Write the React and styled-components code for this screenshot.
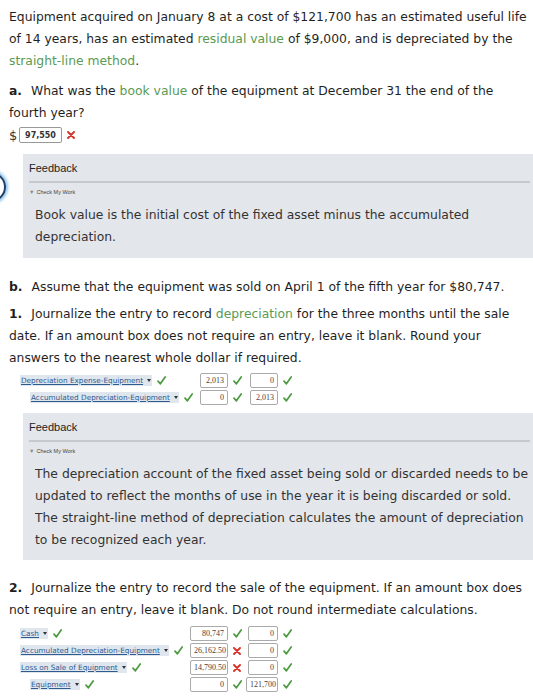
import React from 'react';
import styled, { createGlobalStyle } from 'styled-components';

const GlobalStyle = createGlobalStyle`
  html, body {
    margin: 0;
    padding: 0;
    background: #fff;
  }
  body {
    font-family: "DejaVu Sans", Verdana, sans-serif;
    color: #222;
  }
`;

const Page = styled.div`
  position: relative;
  width: 533px;
  height: 700px;
  overflow: hidden;
  padding: 6px 0 0 9px;
  box-sizing: border-box;
`;

const Para = styled.p`
  margin: 0 0 ${(p) => p.$gap ?? 8}px 0;
  font-size: 12.35px;
  line-height: 22px;
  color: #1f1f1f;
`;

const Term = styled.span`
  color: #5a9a52;
`;

const Num = styled.b`
  font-weight: bold;
  margin-right: 9px;
`;

const AnswerRow = styled.div`
  display: flex;
  align-items: center;
  height: 22px;
  margin-bottom: 8px;
`;

const Dollar = styled.span`
  font-size: 13px;
  color: #333;
  width: 10px;
`;

const AnswerBox = styled.span`
  display: inline-block;
  width: 43px;
  height: 16px;
  line-height: 15px;
  border: 1px solid #999;
  border-radius: 2px;
  font-size: 8px;
  font-weight: bold;
  text-align: center;
  color: #333;
  box-sizing: border-box;
`;

const MarkSlot = styled.span`
  display: inline-flex;
  align-items: center;
  justify-content: ${(p) => (p.$start ? 'flex-start' : 'center')};
  width: ${(p) => p.$w || 14}px;
  padding-left: ${(p) => p.$pl || 0}px;
  box-sizing: border-box;
  flex-shrink: 0;
`;

function Mark({ bad, w, start, pl }) {
  return (
    <MarkSlot $w={w} $start={start} $pl={pl}>
      {bad ? (
        <svg width="8" height="8" viewBox="0 0 8 8">
          <path d="M1 1 L7 7 M7 1 L1 7" stroke="#d8342b" strokeWidth="1.9" strokeLinecap="round" />
        </svg>
      ) : (
        <svg width="9" height="9" viewBox="0 0 9 9">
          <path d="M1 5.2 L3.4 7.8 L8.2 1" fill="none" stroke="#4b9b3f" strokeWidth="1.7" strokeLinecap="round" strokeLinejoin="round" />
        </svg>
      )}
    </MarkSlot>
  );
}

const FeedbackBox = styled.div`
  margin: ${(p) => p.$top ?? 0}px -9px ${(p) => p.$bottom ?? 0}px 14px;
  background: #e3e6ea;
  padding: 8px 12px 10px 6px;
  height: ${(p) => p.$h}px;
  box-sizing: border-box;
`;

const FeedbackTitle = styled.div`
  font-family: "Liberation Sans", Arial, sans-serif;
  font-size: 11px;
  color: #222;
  line-height: 13px;
  padding-bottom: 6px;
  border-bottom: 2px solid #c6cacf;
`;

const CheckWork = styled.div`
  font-family: "Liberation Sans", Arial, sans-serif;
  font-size: 5.5px;
  color: #444;
  margin: 5px 0 8px;
  line-height: 8px;
`;

const Triangle = styled.span`
  color: #888;
  margin-right: 2px;
`;

const FeedbackText = styled.p`
  margin: 0 0 0 6px;
  font-size: 12.35px;
  line-height: 22px;
  color: #333;
`;

const Journal = styled.div`
  display: flex;
  flex-direction: column;
  margin: 0 0 ${(p) => p.$bottom ?? 0}px 11px;
`;

const JRow = styled.div`
  display: grid;
  grid-template-columns: 170px 38px 18px 32px 18px;
  align-items: center;
  height: 17px;
`;

const AccountCell = styled.div`
  display: flex;
  align-items: center;
  padding-left: ${(p) => (p.$credit ? 10 : 0)}px;
  white-space: nowrap;
`;

const Account = styled.span`
  font-size: 7.3px;
  color: #2f5a8e;
  text-decoration: underline;
  background: #dfe6ee;
  padding: 0 1px;
  white-space: nowrap;
  line-height: 11px;
  display: inline-flex;
  align-items: center;
`;

const Caret = styled.span`
  display: inline-block;
  margin-left: 4px;
  width: 0;
  height: 0;
  border-left: 2.5px solid transparent;
  border-right: 2.5px solid transparent;
  border-top: 3px solid #333;
`;

const AmountCell = styled.div`
  display: flex;
  justify-content: flex-end;
`;

const Amount = styled.span`
  display: inline-block;
  min-width: ${(p) => p.$min || 28}px;
  height: 15px;
  line-height: 14px;
  padding: 0 3px;
  border: 1px solid #aaa;
  border-radius: 2px;
  box-sizing: border-box;
  font-family: "Liberation Serif", "Times New Roman", serif;
  font-size: 8px;
  color: #444;
  text-align: right;
  background: #fff;
`;

const FocusRing = styled.div`
  position: absolute;
  left: -24px;
  top: 172px;
  width: 26px;
  height: 26px;
  border-radius: 50%;
  border: 2px solid #1c3f66;
  box-shadow: 0 0 3px 2px #8fc3ec;
`;

function Row({ account, credit, debit, creditAmt, dOk = true, cOk = true, min, cmin }) {
  return (
    <JRow>
      <AccountCell $credit={credit}>
        <Account>
          {account}
          <Caret />
        </Account>
        <Mark w={14} start pl={5} />
      </AccountCell>
      <AmountCell>
        <Amount $min={min}>{debit}</Amount>
      </AmountCell>
      <Mark w={18} bad={!dOk} />
      <AmountCell>
        <Amount $min={cmin}>{creditAmt}</Amount>
      </AmountCell>
      <Mark w={18} bad={!cOk} />
    </JRow>
  );
}

function Feedback({ h, bottom, children }) {
  return (
    <FeedbackBox $h={h} $bottom={bottom}>
      <FeedbackTitle>Feedback</FeedbackTitle>
      <CheckWork>
        <Triangle>▼</Triangle>Check My Work
      </CheckWork>
      <FeedbackText>{children}</FeedbackText>
    </FeedbackBox>
  );
}

export default function App() {
  return (
    <>
      <GlobalStyle />
      <Page>
        <FocusRing />
        <Para>
          Equipment acquired on January 8 at a cost of $121,700 has an estimated useful life
          of 14 years, has an estimated <Term>residual value</Term> of $9,000, and is depreciated by the{' '}
          <Term>straight-line method</Term>.
        </Para>
        <Para $gap={0}>
          <Num>a.</Num>What was the <Term>book value</Term> of the equipment at December 31 the end of the
          fourth year?
        </Para>
        <AnswerRow>
          <Dollar>$</Dollar>
          <AnswerBox>97,550</AnswerBox>
          <Mark w={18} bad />
        </AnswerRow>
        <Feedback h={104} bottom={18}>
          Book value is the initial cost of the fixed asset minus the accumulated depreciation.
        </Feedback>
        <Para $gap={5}>
          <Num>b.</Num>Assume that the equipment was sold on April 1 of the fifth year for $80,747.
        </Para>
        <Para $gap={3}>
          <Num>1.</Num>Journalize the entry to record <Term>depreciation</Term> for the three months until the sale
          date. If an amount box does not require an entry, leave it blank. Round your
          answers to the nearest whole dollar if required.
        </Para>
        <Journal $bottom={7}>
          <Row account="Depreciation Expense-Equipment" debit="2,013" creditAmt="0" cmin={28} />
          <Row account="Accumulated Depreciation-Equipment" credit debit="0" creditAmt="2,013" cmin={28} />
        </Journal>
        <Feedback h={147} bottom={17}>
          The depreciation account of the fixed asset being sold or discarded needs to be
          updated to reflect the months of use in the year it is being discarded or sold.
          The straight-line method of depreciation calculates the amount of depreciation
          to be recognized each year.
        </Feedback>
        <Para $gap={4}>
          <Num>2.</Num>Journalize the entry to record the sale of the equipment. If an amount box does
          not require an entry, leave it blank. Do not round intermediate calculations.
        </Para>
        <Journal>
          <Row account="Cash" debit="80,747" creditAmt="0" min={38} cmin={30} />
          <Row account="Accumulated Depreciation-Equipment" debit="26,162.50" creditAmt="0" dOk={false} min={38} cmin={30} />
          <Row account="Loss on Sale of Equipment" debit="14,790.50" creditAmt="0" dOk={false} min={38} cmin={30} />
          <Row account="Equipment" credit debit="0" creditAmt="121,700" min={38} cmin={30} />
        </Journal>
      </Page>
    </>
  );
}
